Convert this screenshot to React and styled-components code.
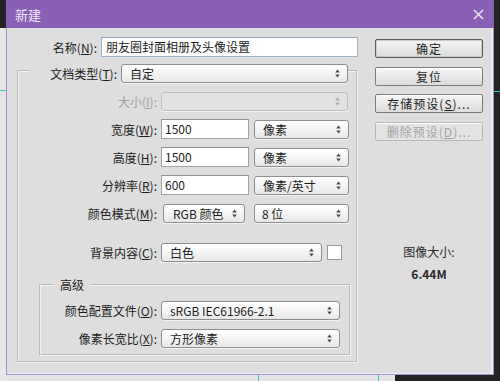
import React from 'react';
import styled, { createGlobalStyle } from 'styled-components';

const Global = createGlobalStyle`
	html, body { margin: 0; padding: 0; }
	body {
		font-family: "Noto Sans CJK SC", "Noto Sans", "Liberation Sans", sans-serif;
		font-size: 12px;
		color: #1c1c1c;
		background: #262626;
	}
	* { box-sizing: border-box; }
`

const Stage = styled.div`
	width: 500px;
	height: 381px;
	overflow: hidden;
	background:
		linear-gradient(#3fc6c0, #3fc6c0) 258px 375px / 1px 6px no-repeat,
		linear-gradient(#3fc6c0, #3fc6c0) 378px 375px / 1px 6px no-repeat,
		linear-gradient(#3fc6c0, #3fc6c0) 0 90px / 6px 1px no-repeat,
		linear-gradient(#3fc6c0, #3fc6c0) 494px 91px / 6px 1px no-repeat,
		linear-gradient(#e6e6e9, #e6e6e9) 0 28px / 6px 353px no-repeat,
		linear-gradient(#e4e4e4, #e4e4e4) 0 375px / 395px 6px no-repeat,
		#232323;
`

const Dialog = styled.div`
	margin-left: 6px;
	width: 488px;
	height: 375px;
	display: flex;
	flex-direction: column;
	background: #dedede;
	border: 1px solid #a394cc;
	border-top: none;
	box-shadow: inset -2px -1px 0 #ececf2;
`

const TitleBar = styled.div`
	height: 28px;
	margin: 0 -1px;
	background: #8a5fb6;
	display: flex;
	align-items: center;
	justify-content: space-between;
	padding: 0 10px 0 9px;
	color: #eee6f6;
	font-size: 13px;
`

const CloseIcon = () => (
	<svg width="11" height="11" viewBox="0 0 11 11">
		<path d="M1 1 L10 10 M10 1 L1 10" stroke="#ece4f6" strokeWidth="1.5" />
	</svg>
);

const Body = styled.div`
	flex: 1;
	display: flex;
`

const LeftCol = styled.div`
	width: 351px;
	display: flex;
	flex-direction: column;
`

const RightCol = styled.div`
	width: 135px;
	padding: 11px 0 0 17px;
	display: flex;
	flex-direction: column;
`

const Row = styled.div`
	height: 28px;
	display: flex;
	align-items: center;
	gap: ${p => p.$gap || 4}px;
	margin-top: ${p => p.$mt || 0}px;
`

const Label = styled.label`
	width: ${p => p.$w}px;
	text-align: right;
	white-space: nowrap;
	color: ${p => p.$disabled ? '#a0a0a0' : '#1c1c1c'};
	u { text-decoration: underline; text-underline-offset: 1px; }
`

const TextInput = styled.div`
	width: ${p => p.$w}px;
	height: 20px;
	border: 1px solid ${p => p.$blue ? '#9fb1c6' : '#a3a3a3'};
	border-top-color: ${p => p.$blue ? '#8ea2ba' : '#8f8f8f'};
	background: #fff;
	padding: 0 ${p => p.$pad || 3}px;
	line-height: 18px;
	white-space: nowrap;
	overflow: hidden;
`

const SelectBox = styled.div`
	width: ${p => p.$w}px;
	height: 19px;
	margin-left: ${p => p.$ml || 0}px;
	border: 1px solid ${p => p.$disabled ? '#bdbdbd' : '#8e8e8e'};
	border-radius: 3px;
	background: ${p => p.$disabled ? '#e2e2e2' : 'linear-gradient(#ffffff, #f2f2f2 60%, #e6e6e6)'};
	box-shadow: 0 1px 0 rgba(255,255,255,0.6);
	display: flex;
	align-items: center;
	justify-content: space-between;
	padding: 0 7px 0 ${p => p.$pad || 8}px;
	white-space: nowrap;
	line-height: 17px;
`

const Arrows = ({ light }) => (
	<svg width="5" height="9" viewBox="0 0 5 9">
		<path d="M2.5 0.5 L4.8 3.5 L0.2 3.5 Z M2.5 8.5 L4.8 5.5 L0.2 5.5 Z" fill={light ? '#a8a8a8' : '#4a4a4a'} />
	</svg>
);

const Select = ({ w, value, disabled, ml, pad }) => (
	<SelectBox $w={w} $disabled={disabled} $ml={ml} $pad={pad}>
		<span>{value}</span>
		<Arrows light={disabled} />
	</SelectBox>
);

const Group = styled.div`
	margin: ${p => p.$mt}px 0 0 ${p => p.$ml}px;
	width: ${p => p.$w}px;
	border: 1px solid #b9b9b9;
	box-shadow: 1px 1px 0 #f3f3f3, inset 1px 1px 0 #f3f3f3;
	padding-bottom: ${p => p.$pb || 0}px;
	display: flex;
	flex-direction: column;
`

const LegendRow = styled.div`
	height: 28px;
	margin: -12px 0 0 12px;
	display: flex;
	align-items: center;
	align-self: flex-start;
	gap: 4px;
	background: #dedede;
`

const Legend = styled.div`
	align-self: flex-start;
	margin: -8px 0 0 13px;
	padding: 0 7px;
	height: 16px;
	line-height: 16px;
	background: #dedede;
`

const Swatch = styled.div`
	width: 15px;
	height: 15px;
	border: 1px solid #9a9a9a;
	background: #fff;
`

const Button = styled.div`
	width: 108px;
	height: 19px;
	margin-bottom: 8.5px;
	border: 1px solid ${p => p.$disabled ? '#b6b6b6' : p.$primary ? '#5c5c5c' : '#7c7c7c'};
	border-radius: 2px;
	background: ${p => p.$disabled ? '#e3e3e3' : 'linear-gradient(#f6f6f6, #e9e9e9 50%, #dcdcdc)'};
	box-shadow: ${p => p.$primary ? 'inset 0 0 0 1px #c9c9c9' : 'inset 0 1px 0 #fff'};
	color: ${p => p.$disabled ? '#a3a3a3' : '#1c1c1c'};
	display: flex;
	align-items: center;
	justify-content: center;
	letter-spacing: 1px;
	u { text-decoration: underline; }
`

const Info = styled.div`
	width: 108px;
	margin-top: ${p => p.$mt}px;
	text-align: center;
	line-height: 16px;
	font-weight: ${p => p.$bold ? 'bold' : 'normal'};
	color: #2a2a2a;
`

const App = () => (
	<>
		<Global />
		<Stage>
			<Dialog>
				<TitleBar>
					<span>新建</span>
					<CloseIcon />
				</TitleBar>
				<Body>
					<LeftCol>
						<Row $mt={5}>
							<Label $w={90}>名称(<u>N</u>):</Label>
							<TextInput $w={257} $blue $pad={4}>朋友圈封面相册及头像设置</TextInput>
						</Row>
						<Group $mt={9} $ml={10} $w={340} $pb={6}>
							<LegendRow>
								<Label $w={87}>文档类型(<u>T</u>):</Label>
								<Select w={227} value="自定" />
							</LegendRow>
							<Row>
								<Label $w={139} $disabled>大小(<u>I</u>):</Label>
								<Select w={187} disabled value="" />
							</Row>
							<Row>
								<Label $w={139}>宽度(<u>W</u>):</Label>
								<TextInput $w={88}>1500</TextInput>
								<Select w={95} ml={1} value="像素" />
							</Row>
							<Row>
								<Label $w={139}>高度(<u>H</u>):</Label>
								<TextInput $w={88}>1500</TextInput>
								<Select w={95} ml={1} value="像素" />
							</Row>
							<Row>
								<Label $w={139}>分辨率(<u>R</u>):</Label>
								<TextInput $w={88}>600</TextInput>
								<Select w={95} ml={1} value="像素/英寸" />
							</Row>
							<Row>
								<Label $w={139}>颜色模式(<u>M</u>):</Label>
								<Select w={82} ml={2} pad={9} value="RGB 颜色" />
								<Select w={95} ml={5} pad={7} value="8 位" />
							</Row>
							<Row $mt={11} $gap={5}>
								<Label $w={139} style={{ marginRight: -1 }}>背景内容(<u>C</u>):</Label>
								<Select w={161} value="白色" />
								<Swatch />
							</Row>
							<Group $mt={18} $ml={21} $w={311} $pb={2}>
								<Legend>高级</Legend>
								<Row $mt={3}>
									<Label $w={117}>颜色配置文件(<u>O</u>):</Label>
									<Select w={179} value="sRGB IEC61966-2.1" />
								</Row>
								<Row>
									<Label $w={117}>像素长宽比(<u>X</u>):</Label>
									<Select w={179} value="方形像素" />
								</Row>
							</Group>
						</Group>
					</LeftCol>
					<RightCol>
						<Button $primary>确定</Button>
						<Button>复位</Button>
						<Button>存储预设(<u>S</u>)...</Button>
						<Button $disabled>删除预设(<u>D</u>)...</Button>
						<Info $mt={95}>图像大小:</Info>
						<Info $mt={6} $bold>6.44M</Info>
					</RightCol>
				</Body>
			</Dialog>
		</Stage>
	</>
);

export default App;
